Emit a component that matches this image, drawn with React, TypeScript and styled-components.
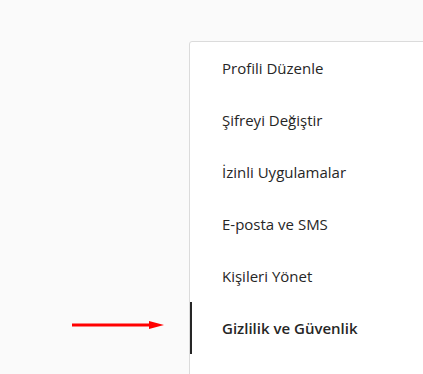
import React from "react";
import styled, { createGlobalStyle } from "styled-components";

const Global = createGlobalStyle`
  html, body { margin: 0; padding: 0; background: #fafafa; }
  body { font-family: "Open Sans", "Noto Sans", sans-serif; overflow: hidden; }
`;

const Page = styled.div`
  width: 423px;
  height: 374px;
  overflow: hidden;
  padding: 41px 0 0 189px;
  box-sizing: border-box;
`;

const Panel = styled.ul`
  list-style: none;
  margin: 0;
  padding: 0;
  width: 400px;
  height: 400px;
  background: #ffffff;
  border: 1px solid #dbdbdb;
  border-top-left-radius: 3px;
  box-sizing: border-box;
`;

const Item = styled.li<{ $active?: boolean }>`
  position: relative;
  height: 52px;
  display: flex;
  align-items: center;
  padding-left: ${(p) => (p.$active ? "30px" : "32px")};
  border-left: ${(p) => (p.$active ? "2px solid #262626" : "none")};
  color: #262626;
  font-size: 15px;
  font-weight: ${(p) => (p.$active ? 600 : 400)};
  line-height: 20px;
  white-space: nowrap;
`;

const Arrow = styled.svg`
  position: absolute;
  left: -121px;
  top: 17px;
  width: 94px;
  height: 12px;
`;

const items = [
  "Profili Düzenle",
  "Şifreyi Değiştir",
  "İzinli Uygulamalar",
  "E-posta ve SMS",
  "Kişileri Yönet",
  "Gizlilik ve Güvenlik",
];

export default function App() {
  return (
    <>
      <Global />
      <Page>
        <Panel>
          {items.map((t, i) => {
            const active = i === items.length - 1;
            return (
              <Item key={t} $active={active}>
                {active && (
                  <Arrow viewBox="0 0 94 12">
                    <line x1="1" y1="6" x2="80" y2="6" stroke="#ff0000" strokeWidth="3" />
                    <polygon points="78,2 93,6 78,10" fill="#ff0000" />
                  </Arrow>
                )}
                {t}
              </Item>
            );
          })}
        </Panel>
      </Page>
    </>
  );
}
